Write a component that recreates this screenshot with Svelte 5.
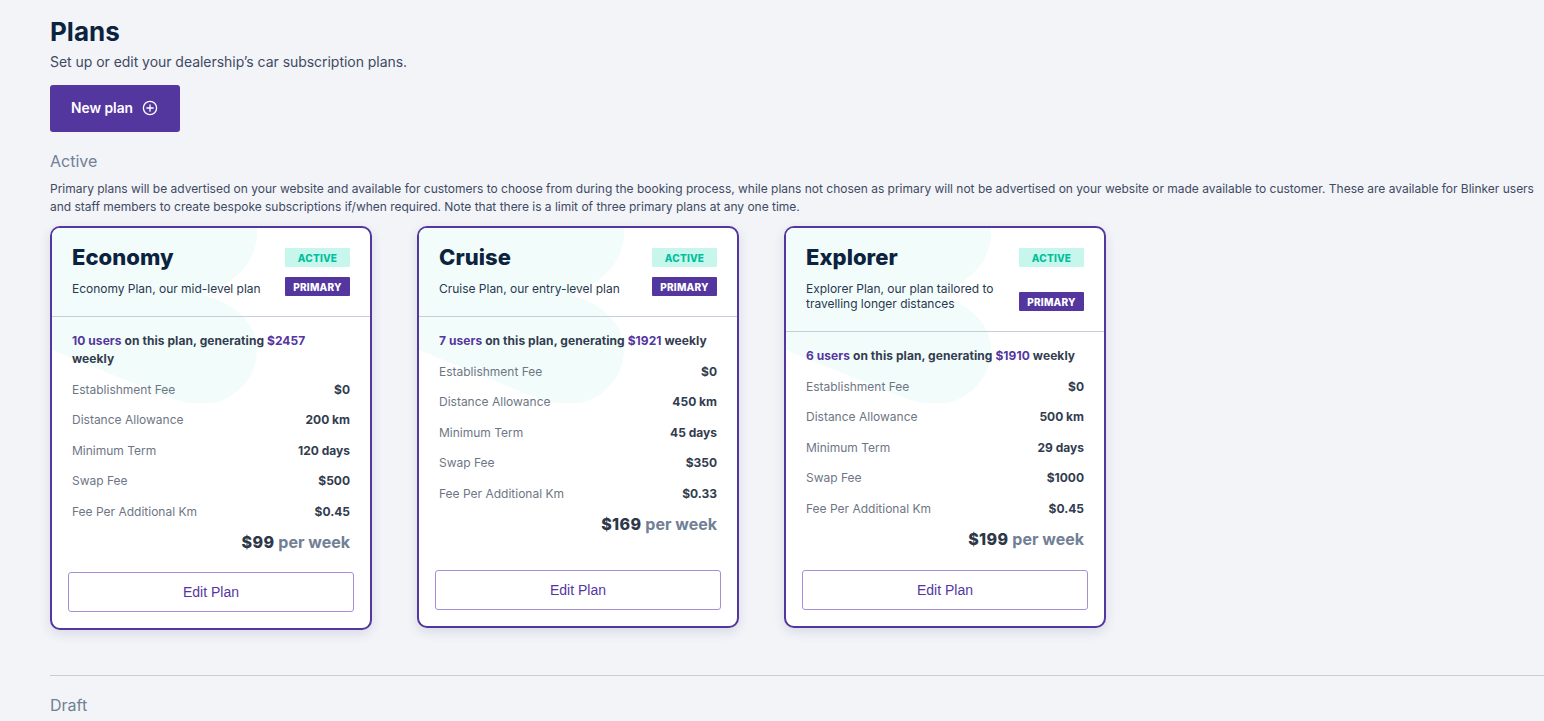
<script>
  const plans = [
    { name: 'Economy', desc: 'Economy Plan, our mid-level plan', users: 10, rev: 2457, fee: '$0', km: '200 km', term: '120 days', swap: '$500', add: '$0.45', price: 99 },
    { name: 'Cruise', desc: 'Cruise Plan, our entry-level plan', users: 7, rev: 1921, fee: '$0', km: '450 km', term: '45 days', swap: '$350', add: '$0.33', price: 169 },
    { name: 'Explorer', desc: 'Explorer Plan, our plan tailored to travelling longer distances', users: 6, rev: 1910, fee: '$0', km: '500 km', term: '29 days', swap: '$1000', add: '$0.45', price: 199 }
  ];
  const rows = (p) => [
    ['Establishment Fee', p.fee],
    ['Distance Allowance', p.km],
    ['Minimum Term', p.term],
    ['Swap Fee', p.swap],
    ['Fee Per Additional Km', p.add]
  ];
</script>

<main class="page">
  <h1>Plans</h1>
  <p class="sub">Set up or edit your dealership’s car subscription plans.</p>
  <button class="new">
    <span>New plan</span>
    <svg width="16" height="16" viewBox="0 0 16 16" fill="none" stroke="#fff" stroke-width="1.3" stroke-linecap="round">
      <circle cx="8" cy="8" r="6.6" />
      <path d="M8 4.8v6.4M4.8 8h6.4" />
    </svg>
  </button>
  <h2>Active</h2>
  <p class="note">Primary plans will be advertised on your website and available for customers to choose from during the booking process, while plans not chosen as primary will not be advertised on your website or made available to customer. These are available for Blinker users and staff members to create bespoke subscriptions if/when required. Note that there is a limit of three primary plans at any one time.</p>

  <section class="cards">
    {#each plans as p}
      <article class="card">
        <svg class="blob" width="206" height="175" viewBox="0 0 206 175" aria-hidden="true">
          <path d="M0 0H205C207 28 190 52 151 67C186 76 206 98 205 124C204 152 180 175 152 176C132 176 118 170 100 163L0 122Z" fill="#f2fdfb" />
        </svg>
        <header class="head">
          <div class="info">
            <h3>{p.name}</h3>
            <p class="desc">{p.desc}</p>
          </div>
          <div class="tags">
            <span class="tag active">ACTIVE</span>
            <span class="tag primary">PRIMARY</span>
          </div>
        </header>
        <div class="body">
          <p class="stat"><b>{p.users} users</b> on this plan, generating <b>${p.rev}</b> weekly</p>
          {#each rows(p) as [k, v]}
            <div class="row"><span>{k}</span><strong>{v}</strong></div>
          {/each}
          <div class="price"><span class="amt">${p.price}</span> <span class="per">per week</span></div>
          <button class="edit">Edit Plan</button>
        </div>
      </article>
    {/each}
  </section>

  <hr />
  <h2 class="draft">Draft</h2>
</main>

<style>
  :global(body) {
    margin: 0;
    background: #f2f4f8;
    font-family: Inter, "Liberation Sans", sans-serif;
    overflow: hidden;
  }
  .page {
    padding: 15px 0 0 50px;
    height: 706px;
    overflow: hidden;
  }
  h1 {
    margin: 0;
    font-size: 26px;
    line-height: 34px;
    font-weight: 700;
    color: #0c2340;
  }
  .sub {
    margin: 3px 0 0;
    font-size: 14px;
    line-height: 19px;
    letter-spacing: -0.04px;
    color: #3f4a63;
  }
  .new {
    display: flex;
    align-items: center;
    gap: 9px;
    width: 130px;
    height: 47px;
    margin-top: 14px;
    padding: 0 0 2px 21px;
    border: 0;
    border-radius: 3px;
    background: #54369f;
    color: #fff;
    font: 600 13.8px Inter, sans-serif;
  }
  h2 {
    margin: 19px 0 0;
    font-size: 16px;
    line-height: 20px;
    font-weight: 400;
    color: #718096;
  }
  .note {
    margin: 9px 0 0;
    font-size: 12px;
    line-height: 18px;
    letter-spacing: -0.012px;
    color: #3f4a63;
  }
  .cards {
    display: flex;
    align-items: flex-start;
    gap: 45px;
    margin-top: 10px;
  }
  .card {
    position: relative;
    display: flex;
    flex-direction: column;
    box-sizing: border-box;
    width: 322px;
    min-height: 402px;
    border: 2px solid #54369f;
    border-radius: 10px;
    background: #fff;
    box-shadow: 0 4px 12px rgba(30, 40, 80, 0.12);
    overflow: hidden;
  }
  .blob {
    position: absolute;
    left: 0;
    top: 0;
  }
  .head {
    position: relative;
    display: flex;
    justify-content: space-between;
    padding: 20px;
    border-bottom: 1px solid #c9cdd8;
  }
  .info {
    width: 200px;
  }
  h3 {
    margin: 0;
    font-size: 22px;
    line-height: 18px;
    font-weight: 800;
    letter-spacing: 0.05px;
    color: #0c2340;
  }
  .desc {
    margin: 15px 0 0;
    font-size: 12px;
    line-height: 15px;
    letter-spacing: -0.02px;
    color: #2a3750;
  }
  .tags {
    display: flex;
    flex-direction: column;
    justify-content: space-between;
    align-items: flex-end;
  }
  .tag {
    display: block;
    box-sizing: border-box;
    width: 65px;
    height: 19px;
    padding-top: 1px;
    border-radius: 1px;
    font-size: 10px;
    font-weight: 800;
    line-height: 19px;
    letter-spacing: 0.2px;
    text-align: center;
  }
  .active {
    margin-bottom: 10px;
    background: #c7f7ec;
    color: #00bf9c;
  }
  .primary {
    background: #54369f;
    color: #fff;
  }
  .body {
    position: relative;
    flex: 1;
    display: flex;
    flex-direction: column;
    padding: 15px 20px 16px;
  }
  .stat {
    margin: 0 0 6px;
    padding-right: 4px;
    font-size: 12px;
    line-height: 18px;
    font-weight: 700;
    letter-spacing: 0.07px;
    color: #323c4f;
  }
  .stat b {
    font-weight: 700;
    color: #54369f;
  }
  .row {
    display: flex;
    justify-content: space-between;
    align-items: center;
    height: 30.5px;
    font-size: 12px;
  }
  .row span {
    color: #6e7685;
  }
  .row strong {
    font-weight: 700;
    color: #323c4f;
  }
  .price {
    margin: 0 0 17px;
    padding-top: 2px;
    text-align: right;
    font-size: 16px;
    line-height: 26px;
    font-weight: 700;
  }
  .amt {
    font-weight: 800;
    letter-spacing: 0.4px;
    color: #2d3748;
  }
  .per {
    color: #718096;
  }
  .edit {
    height: 40px;
    margin: auto -4px 0;
    border: 1px solid #a78fd8;
    border-radius: 3px;
    background: #fff;
    color: #54369f;
    font: 400 14px "Liberation Sans", Arial, sans-serif;
  }
  hr {
    margin: 45px 0 0;
    border: 0;
    border-top: 1px solid #c9ccd4;
  }
  .draft {
    margin-top: 19px;
  }
</style>
